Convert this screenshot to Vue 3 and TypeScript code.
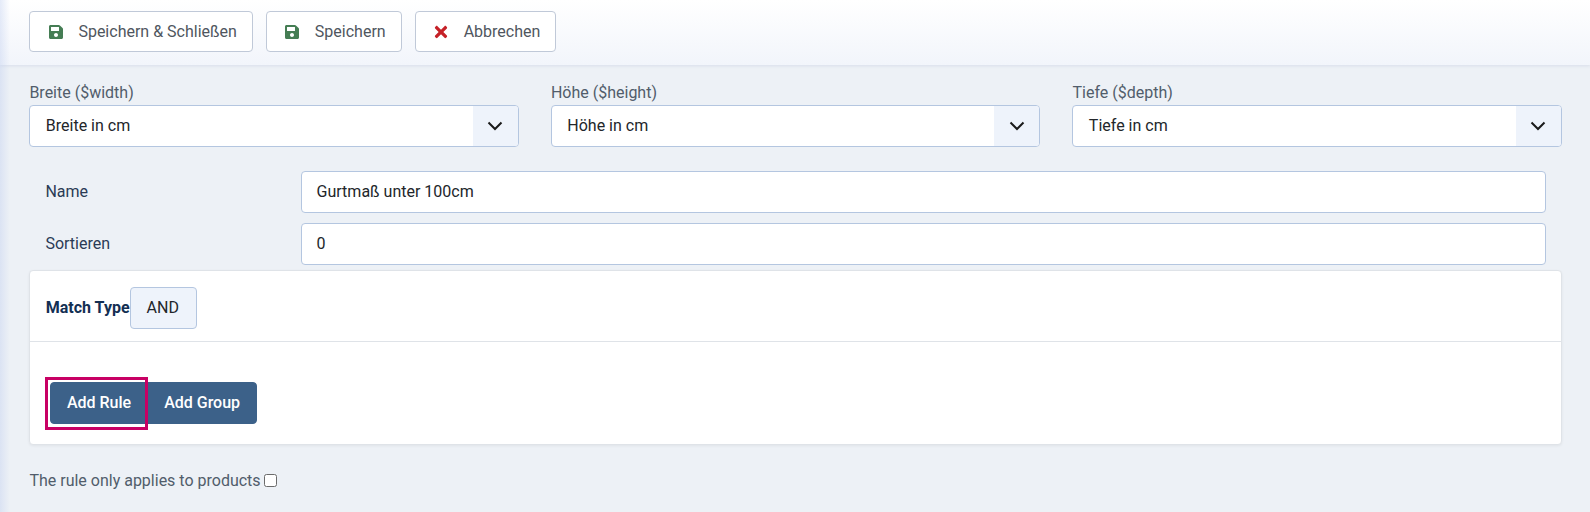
<script setup lang="ts">
const selects = [
  { label: 'Breite ($width)', value: 'Breite in cm' },
  { label: 'Höhe ($height)', value: 'Höhe in cm' },
  { label: 'Tiefe ($depth)', value: 'Tiefe in cm' },
]
const fields = [
  { label: 'Name', value: 'Gurtmaß unter 100cm' },
  { label: 'Sortieren', value: '0' },
]
</script>

<template>
  <div class="page">
    <div class="toolbar">
      <button class="tool" type="button">
        <svg class="icon" viewBox="0 0 448 512"><path fill="#457d54" d="M433.9 129.9l-83.9-83.9A48 48 0 0 0 316.1 32H48C21.5 32 0 53.5 0 80v352c0 26.5 21.5 48 48 48h352c26.5 0 48-21.5 48-48V163.9a48 48 0 0 0-14.1-34zM224 416c-35.3 0-64-28.7-64-64s28.7-64 64-64 64 28.7 64 64-28.7 64-64 64zm96-304.5V212c0 6.6-5.4 12-12 12H76c-6.6 0-12-5.4-12-12V108c0-6.6 5.4-12 12-12h228.5c3.2 0 6.2 1.3 8.5 3.5l3.5 3.5c2.2 2.3 3.5 5.3 3.5 8.5z"/></svg>
        <span>Speichern &amp; Schließen</span>
      </button>
      <button class="tool" type="button">
        <svg class="icon" viewBox="0 0 448 512"><path fill="#457d54" d="M433.9 129.9l-83.9-83.9A48 48 0 0 0 316.1 32H48C21.5 32 0 53.5 0 80v352c0 26.5 21.5 48 48 48h352c26.5 0 48-21.5 48-48V163.9a48 48 0 0 0-14.1-34zM224 416c-35.3 0-64-28.7-64-64s28.7-64 64-64 64 28.7 64 64-28.7 64-64 64zm96-304.5V212c0 6.6-5.4 12-12 12H76c-6.6 0-12-5.4-12-12V108c0-6.6 5.4-12 12-12h228.5c3.2 0 6.2 1.3 8.5 3.5l3.5 3.5c2.2 2.3 3.5 5.3 3.5 8.5z"/></svg>
        <span>Speichern</span>
      </button>
      <button class="tool" type="button">
        <svg class="icon icon-x" viewBox="0 0 352 512"><path fill="#c52127" d="M242.7 256l100.1-100.1c12.3-12.3 12.3-32.2 0-44.5l-22.2-22.2c-12.3-12.3-32.2-12.3-44.5 0L176 189.3 75.9 89.2c-12.3-12.3-32.2-12.3-44.5 0L9.2 111.4c-12.3 12.3-12.3 32.2 0 44.5L109.3 256 9.2 356.1c-12.3 12.3-12.3 32.2 0 44.5l22.2 22.2c12.3 12.3 32.2 12.3 44.5 0L176 322.7l100.1 100.1c12.3 12.3 32.2 12.3 44.5 0l22.2-22.2c12.3-12.3 12.3-32.2 0-44.5L242.7 256z"/></svg>
        <span>Abbrechen</span>
      </button>
    </div>

    <div class="content">
      <div class="selects">
        <div v-for="s in selects" :key="s.label" class="sel-col">
          <div class="sel-label">{{ s.label }}</div>
          <div class="select">
            <span class="sel-value">{{ s.value }}</span>
            <span class="sel-arrow">
              <svg viewBox="0 0 16 10" width="16" height="10"><path d="M1.500 1.500 8 8l6.500-6.500" fill="none" stroke="#1a1a1a" stroke-width="2"/></svg>
            </span>
          </div>
        </div>
      </div>

      <div class="fields">
        <div v-for="f in fields" :key="f.label" class="field">
          <div class="field-label">{{ f.label }}</div>
          <div class="input">{{ f.value }}</div>
        </div>
      </div>

      <div class="card">
        <div class="card-head">
          <strong class="match">Match Type</strong>
          <span class="and">AND</span>
        </div>
        <div class="card-body">
          <div class="btn-group">
            <button class="add add-rule" type="button">Add Rule</button>
            <button class="add add-group" type="button">Add Group</button>
          </div>
        </div>
      </div>

      <label class="check-row">
        <span>The rule only applies to products</span>
        <span class="check"></span>
      </label>
    </div>
  </div>
</template>

<style>
html, body { margin: 0; background: #edf1f6; }
</style>

<style scoped>
.page {
  position: relative;
  width: 1590px;
  height: 512px;
  overflow: hidden;
  background: #edf1f6;
  font-family: Roboto, "Liberation Sans", sans-serif;
  font-size: 16px;
  line-height: 24px;
  color: #495057;
  box-sizing: border-box;
}
.page::after {
  content: "";
  position: absolute;
  left: 0; top: 0; bottom: 0;
  width: 10px;
  background: linear-gradient(90deg, rgba(197,210,240,.45), rgba(197,210,240,0));
  pointer-events: none;
}
.toolbar {
  height: 65px;
  box-sizing: border-box;
  padding: 11px 29px 0 29.4px;
  display: flex;
  gap: 12.8px;
  background: linear-gradient(180deg, #ffffff 0%, #f2f5fb 100%);
  box-shadow: 0 1px 3px rgba(120,140,180,.18);
}
.tool {
  height: 41px;
  box-sizing: border-box;
  display: flex;
  align-items: center;
  padding: 0 15.2px 0 18.5px;
  gap: 15.5px;
  background: #fff;
  border: 1px solid #c0c9d8;
  border-radius: 4px;
  font: inherit;
  color: #4f565e;
}
.icon { width: 14px; height: 16px; flex: none; }
.icon-x { height: 18px; }
.content { padding: 0 28px 0 29.4px; }
.selects {
  display: flex;
  gap: 32px;
  margin-top: 16px;
}
.sel-col { flex: 1 1 0; min-width: 0; }
.sel-label { height: 24px; color: #515d6b; }
.select {
  height: 42px;
  box-sizing: border-box;
  display: flex;
  background: #fff;
  border: 1px solid #b4c6e0;
  border-radius: 4px;
  overflow: hidden;
}
.sel-value { flex: 1; padding: 0 15.4px; line-height: 40px; color: #22262a; }
.sel-arrow {
  width: 45px;
  display: flex;
  align-items: center;
  justify-content: center;
  background: #eef3fb;
}
.fields { padding: 24px 16px 0 0; display: flex; flex-direction: column; gap: 10px; }
.field { display: flex; align-items: center; }
.field-label { width: 271.6px; padding-left: 16px; box-sizing: border-box; color: #2a3b55; }
.input {
  flex: 1;
  height: 42px;
  box-sizing: border-box;
  padding: 0 14.6px;
  line-height: 40px;
  background: #fff;
  border: 1px solid #b4c6e0;
  border-radius: 4px;
  color: #22262a;
}
.card {
  margin-top: 5px;
  background: #fff;
  border: 1px solid #dfe3e8;
  border-radius: 4px;
  box-shadow: 0 1px 3px rgba(0,0,0,.06);
}
.card-head {
  height: 71px;
  box-sizing: border-box;
  padding: 16px 16px 16px 15.4px;
  display: flex;
  align-items: flex-start;
  border-bottom: 1px solid #dfe3e8;
}
.match { line-height: 42px; color: #132f53; font-weight: 700; }
.and {
  height: 42px;
  box-sizing: border-box;
  margin-left: .4px;
  padding: 0 17px 0 15.6px;
  line-height: 40px;
  background: #eef3fb;
  border: 1px solid #b4c6e0;
  border-radius: 4px;
  color: #22262a;
}
.card-body { padding: 40px 20px 20px; }
.btn-group { display: flex; }
.add {
  height: 42px;
  box-sizing: border-box;
  border: 1px solid #3c6189;
  background: #3c6189;
  color: #fff;
  font: inherit;
  font-weight: 500;
  padding: 0 15.5px;
}
.add-rule { position: relative; z-index: 1; border-radius: 4px 0 0 4px; }
.add-rule::after {
  content: "";
  position: absolute;
  left: -6px; top: -6px; right: -1px; bottom: -7px;
  border: 3px solid #c80064;
  pointer-events: none;
}
.add-group { margin-left: -1px; padding: 0 16px 0 16.5px; border-radius: 0 4px 4px 0; }
.check-row {
  display: flex;
  align-items: center;
  gap: 3px;
  margin-top: 24px;
  color: #515d6b;
}
.check {
  width: 13px;
  height: 13px;
  margin-top: -2px;
  box-sizing: border-box;
  border: 1px solid #6b6b6b;
  border-radius: 2.500px;
  background: #fff;
}
</style>
